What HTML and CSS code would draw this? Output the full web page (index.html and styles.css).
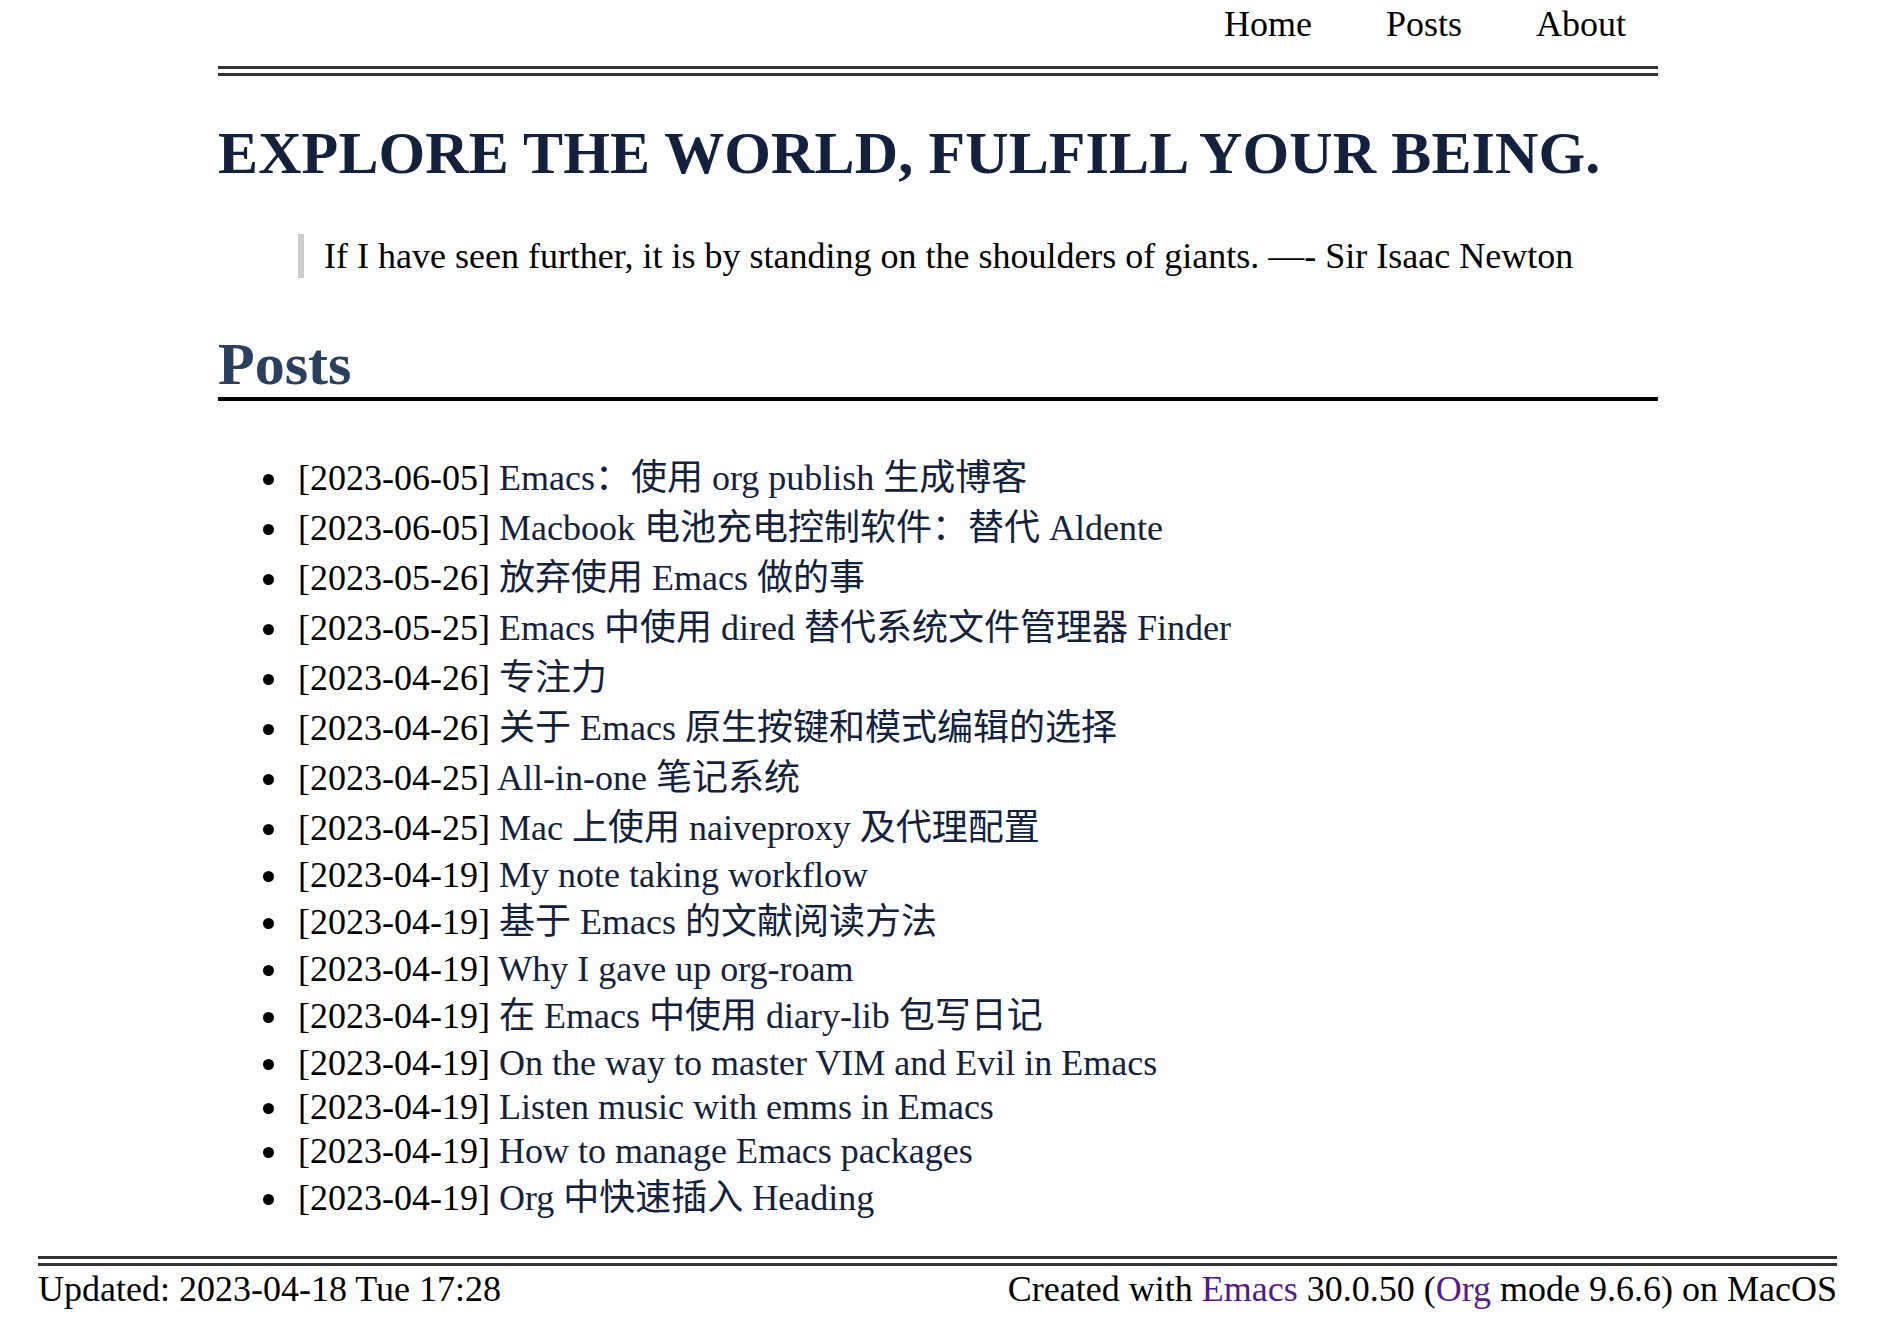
FILE: index.html
```html
<!DOCTYPE html>
<html lang="zh-CN">
<head>
<meta charset="utf-8">
<title>Explore the world, fulfill your being.</title>
<link rel="stylesheet" href="styles.css">
</head>
<body>
<header class="site-header">
  <nav class="nav">
    <a class="nav-link" href="#">Home</a>
    <a class="nav-link" href="#">Posts</a>
    <a class="nav-link" href="#">About</a>
  </nav>
</header>
<main class="content">
  <h1 class="title">EXPLORE THE WORLD, FULFILL YOUR BEING.</h1>
  <blockquote class="quote">
    <p>If I have seen further, it is by standing on the shoulders of giants. —- Sir Isaac Newton</p>
  </blockquote>
  <h2 class="section-title">Posts</h2>
  <ul class="post-list">
    <li class="zh">[2023-06-05] <a href="#">Emacs：使用 org publish 生成博客</a></li>
    <li class="zh">[2023-06-05] <a href="#">Macbook 电池充电控制软件：替代 Aldente</a></li>
    <li class="zh">[2023-05-26] <a href="#">放弃使用 Emacs 做的事</a></li>
    <li class="zh">[2023-05-25] <a href="#">Emacs 中使用 dired 替代系统文件管理器 Finder</a></li>
    <li class="zh">[2023-04-26] <a href="#">专注力</a></li>
    <li class="zh">[2023-04-26] <a href="#">关于 Emacs 原生按键和模式编辑的选择</a></li>
    <li class="zh">[2023-04-25] <a href="#">All-in-one 笔记系统</a></li>
    <li class="zh">[2023-04-25] <a href="#">Mac 上使用 naiveproxy 及代理配置</a></li>
    <li>[2023-04-19] <a href="#">My note taking workflow</a></li>
    <li class="zh">[2023-04-19] <a href="#">基于 Emacs 的文献阅读方法</a></li>
    <li>[2023-04-19] <a href="#">Why I gave up org-roam</a></li>
    <li class="zh">[2023-04-19] <a href="#">在 Emacs 中使用 diary-lib 包写日记</a></li>
    <li>[2023-04-19] <a href="#">On the way to master VIM and Evil in Emacs</a></li>
    <li>[2023-04-19] <a href="#">Listen music with emms in Emacs</a></li>
    <li>[2023-04-19] <a href="#">How to manage Emacs packages</a></li>
    <li class="zh">[2023-04-19] <a href="#">Org 中快速插入 Heading</a></li>
  </ul>
</main>
<footer class="site-footer">
  <span class="updated">Updated: 2023-04-18 Tue 17:28</span>
  <span class="creator">Created with <a class="ext" href="#">Emacs</a> 30.0.50 (<a class="ext" href="#">Org</a> mode 9.6.6) on MacOS</span>
</footer>
</body>
</html>
```

FILE: styles.css
```css
html, body {
  margin: 0;
  padding: 0;
  background: #fff;
}

body {
  font-family: "Liberation Serif", "Noto Sans CJK SC", serif;
  font-size: 36px;
  color: #000;
}

a {
  text-decoration: none;
}

.site-header {
  width: 1440px;
  margin: 0 0 0 calc(50% - 721px);
  padding: 3px 0 21px;
  border-bottom: 10px double #333;
}

.nav {
  display: flex;
  justify-content: flex-end;
  gap: 74px;
  padding-right: 32px;
  line-height: 42px;
}

.nav-link {
  color: #000;
}

.content {
  width: 1440px;
  margin: 0 0 0 calc(50% - 721px);
}

.title {
  margin: 43px 0 0;
  font-size: 60px;
  line-height: 69px;
  font-weight: bold;
  letter-spacing: 0.13px;
  color: #14213d;
}

.quote {
  margin: 46px 0 0 80px;
  padding: 2px 0 1px 20px;
  border-left: 6px solid #ccc;
}

.quote p {
  margin: 0;
  line-height: 41px;
}

.section-title {
  margin: 53px 0 0;
  font-size: 60px;
  line-height: 66px;
  font-weight: bold;
  color: #2a405f;
  border-bottom: 4px solid #000;
}

.post-list {
  margin: 52px 0 0;
  padding-left: 73px;
  list-style: disc;
}

.post-list li {
  padding-left: 7px;
  line-height: 44px;
}

.post-list li.zh {
  line-height: 50px;
}

.post-list a {
  color: #14213d;
}

.site-footer {
  margin: 33px 41px 0 38px;
  padding-top: 3px;
  border-top: 10px double #333;
  display: flex;
  justify-content: space-between;
  line-height: 41px;
}

.site-footer .ext {
  color: #551a8b;
}
```
